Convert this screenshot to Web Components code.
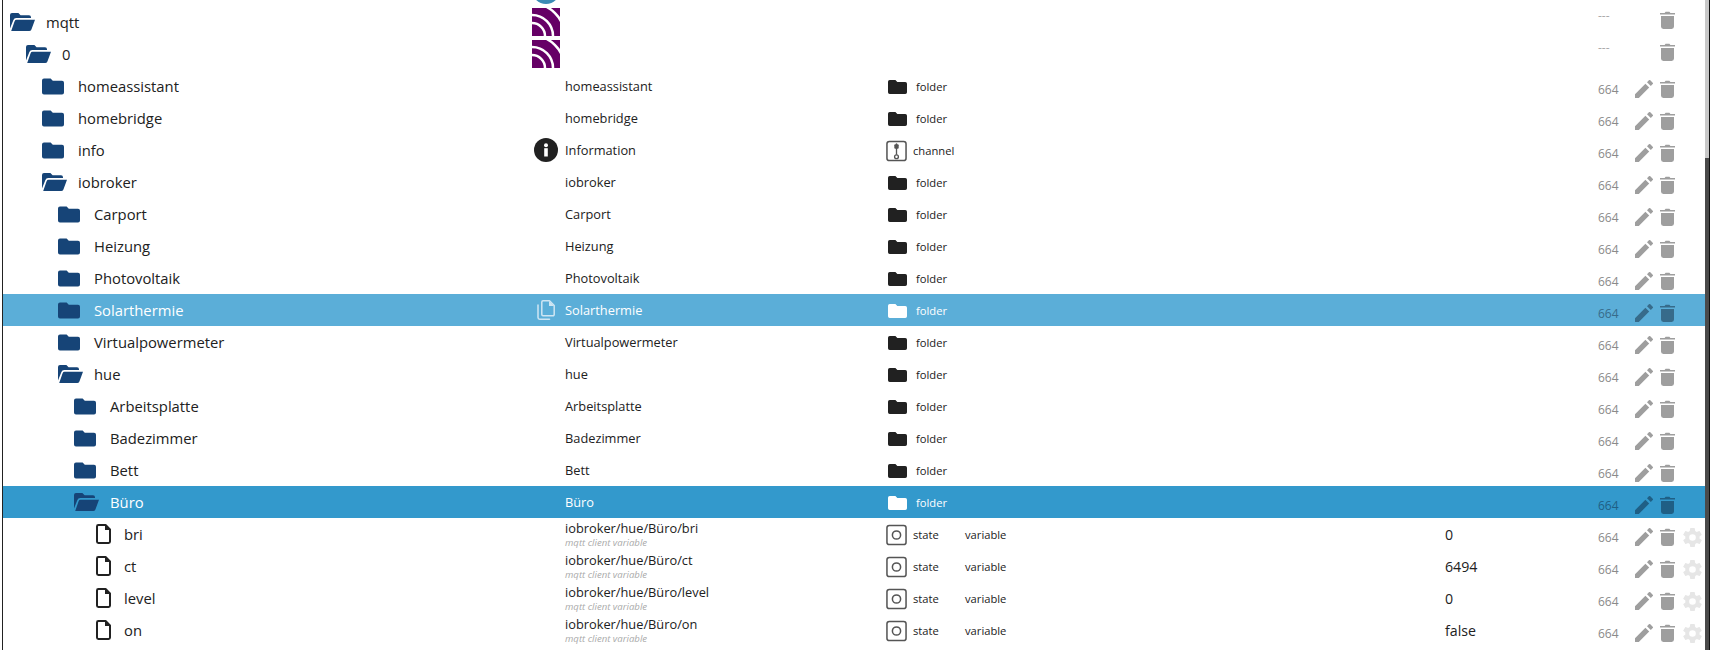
<!DOCTYPE html>
<html>
<head>
<meta charset="utf-8">
<title>Objects</title>
<style>
    html, body { margin: 0; height: 650px; overflow: hidden; background: #fff; }
</style>
</head>
<body>
<object-browser></object-browser>

<script>
const FOLDER_PATH = 'M2 0h6.6l2.2 2.2H20a2 2 0 0 1 2 2V14a2 2 0 0 1-2 2H2a2 2 0 0 1-2-2V2a2 2 0 0 1 2-2z';

const ICONS = {
    folder: `<svg viewBox="0 0 22 16" width="22" height="17"><path fill="currentColor" d="${FOLDER_PATH}"/></svg>`,
    smallfolder: `<svg viewBox="0 0 22 16" width="19" height="14"><path fill="currentColor" d="${FOLDER_PATH}"/></svg>`,
    open: '<svg viewBox="0 0 25 18" width="25" height="18"><path fill="currentColor" d="M2 0h6.400l2.200 2.200H19a2 2 0 0 1 2 2V5H6.200A3 3 0 0 0 3.400 7L0 15.400V2a2 2 0 0 1 2-2z"/><path fill="currentColor" d="M6.600 6.800H25l-3.400 9.200a2.400 2.400 0 0 1-2.200 2H1.200L4.600 8.200a2.200 2.200 0 0 1 2-1.400z"/></svg>',
    file: '<svg viewBox="0 0 15 20" width="15" height="20"><path fill="none" stroke="currentColor" stroke-width="2" stroke-linejoin="round" d="M2.400 1H9.600L14 5.400V17.600A1.400 1.400 0 0 1 12.600 19H2.400A1.400 1.400 0 0 1 1 17.600V2.400A1.400 1.400 0 0 1 2.400 1z"/><path fill="currentColor" d="M9 1h1l4 4v1H9z"/></svg>',
    pencil: '<svg viewBox="0 0 18 18" width="18" height="18"><path fill="currentColor" d="M0 14.200V18h3.800L14.200 7.600l-3.800-3.800zM17.700 4.100a1 1 0 0 0 0-1.400L15.300.3a1 1 0 0 0-1.400 0L12 2.200 15.800 6z"/></svg>',
    trash: '<svg viewBox="0 0 15 18" width="15" height="18"><path fill="currentColor" d="M1 5h13v10.600a2.400 2.400 0 0 1-2.400 2.400H3.400A2.400 2.400 0 0 1 1 15.600zM0 2h4.600l1-1.200h3.800l1 1.200H15v1.600H0z"/></svg>',
    gear: '<svg viewBox="2 2 20 20" width="19" height="19"><path fill="currentColor" d="M19.400 13a7.500 7.500 0 0 0 0-2l2.100-1.600a.5.5 0 0 0 .1-.6l-2-3.500a.5.5 0 0 0-.6-.2l-2.500 1a7.300 7.300 0 0 0-1.700-1l-.4-2.700A.5.5 0 0 0 14 2h-4a.5.5 0 0 0-.5.4l-.4 2.700a7.300 7.300 0 0 0-1.700 1l-2.500-1a.5.5 0 0 0-.6.2l-2 3.500a.5.5 0 0 0 .1.6L4.500 11a7.500 7.500 0 0 0 0 2l-2.100 1.600a.5.5 0 0 0-.1.6l2 3.500a.5.5 0 0 0 .6.2l2.500-1a7.300 7.300 0 0 0 1.700 1l.4 2.700a.5.5 0 0 0 .5.4h4a.5.5 0 0 0 .5-.4l.4-2.700a7.300 7.300 0 0 0 1.700-1l2.500 1a.5.5 0 0 0 .6-.2l2-3.500a.5.5 0 0 0-.1-.6zM12 15.500a3.500 3.500 0 1 1 0-7 3.500 3.500 0 0 1 0 7z"/></svg>',
    info: '<svg viewBox="0 0 24 24" width="24" height="24"><circle cx="12" cy="12" r="12" fill="#212121"/><rect x="10.200" y="10.200" width="3.600" height="8.300" fill="#fff"/><circle cx="12" cy="7.200" r="2" fill="#fff"/></svg>',
    copy: '<svg viewBox="0 0 18 20" width="18" height="20"><path fill="none" stroke="#cfe6f3" stroke-width="1.500" stroke-linejoin="round" d="M6 .8h6.500L17.200 5.500V14.500A1.200 1.200 0 0 1 16 15.700H6A1.200 1.200 0 0 1 4.800 14.500V2A1.200 1.200 0 0 1 6 .8z"/><path fill="none" stroke="#cfe6f3" stroke-width="1.500" stroke-linecap="round" d="M1 5v12.600A1.600 1.600 0 0 0 2.600 19.200H12.500"/><path fill="#cfe6f3" d="M12 1l5 5h-5z"/></svg>',
    channel: '<svg viewBox="0 0 22 22" width="21" height="22"><rect x="1" y="1" width="20" height="20" rx="2.500" fill="none" stroke="#555" stroke-width="1.600"/><rect x="8.700" y="4" width="4.600" height="4.600" rx="1" fill="#555"/><path stroke="#555" stroke-width="1.400" d="M11 3v12"/><circle cx="11" cy="17" r="2" fill="#fff" stroke="#555" stroke-width="1.400"/></svg>',
    state: '<svg viewBox="0 0 22 22" width="21" height="22"><rect x="1" y="1" width="20" height="20" rx="2.500" fill="none" stroke="#555" stroke-width="1.600"/><circle cx="11" cy="11" r="4.300" fill="none" stroke="#555" stroke-width="1.600"/></svg>',
    mqtt: '<svg viewBox="0 0 28 28" width="28" height="28"><rect width="28" height="28" fill="#660066"/><g fill="none" stroke="#fff" stroke-width="2.500"><path d="M0 15A13 13 0 0 1 13 28"/><path d="M0 7A21 21 0 0 1 21 28"/><path d="M0 -4.500A32.500 32.500 0 0 1 32.500 28"/></g></svg>',
    adapter: '<svg viewBox="0 0 28 28" width="28" height="28"><circle cx="14" cy="14" r="14" fill="#3b8bb5"/><circle cx="14" cy="14" r="10" fill="#2a4a66"/></svg>'
};

class TreeIcon extends HTMLElement {
    constructor() {
        super();
        const shadow = this.attachShadow({ mode: 'open' });
        shadow.innerHTML = `
            <style>
                :host { display: inline-flex; align-items: center; flex: none; }
                svg { display: block; }
            </style>
            ${ICONS[this.getAttribute('name')] || ''}
        `;
    }
}
customElements.define('tree-icon', TreeIcon);

class ObjectRow extends HTMLElement {
    constructor() {
        super();
        const shadow = this.attachShadow({ mode: 'open' });
        shadow.innerHTML = `
            <style>
                :host {
                    display: grid;
                    grid-template-columns: 529px 28px 5px 321px 79px 480px 153px 37px 25px 23px 1fr;
                    align-items: center;
                    height: 32px;
                    color: #212121;
                    white-space: nowrap;
                }
                :host([sel]) { background: #3399cc; color: #fff; }
                :host([hov]) { background: #5baed8; color: #fff; }
                .id { display: flex; align-items: center; height: 32px; font-size: 14.8px; }
                .id tree-icon { width: 25px; margin-right: 11px; color: #164477; }
                .id tree-icon.file { width: 19px; padding-left: 6px; margin-right: 9px; color: #212121; }
                .pic { display: flex; justify-content: center; align-items: center; grid-column: 2 / span 1; }
                .name { grid-column: 4; line-height: 17px; font-size: 12.8px; margin-top: 1px; }
                .name.two { margin-top: 0; }
                .sub { display: block; font-size: 9.6px; line-height: 12px; font-style: italic; color: #aaa; }
                .type { display: flex; align-items: center; font-size: 11.2px; padding-top: 2px; }
                .type span { margin-top: -2px; }
                .type tree-icon { margin-left: 2px; margin-right: 9px; }
                .type.big tree-icon { margin-left: 0; margin-right: 6px; }
                .role { font-size: 11.2px; padding-top: 1px; }
                .value { font-size: 14.2px; }
                .acl { font-size: 12px; color: #8a8a8a; padding-top: 6px; }
                .act { display: flex; padding-top: 6px; color: #9e9e9e; }
                .act.gear { color: #e6e6e6; justify-content: flex-start; }
                :host([sel]) .acl, :host([sel]) .act { color: #1f5f85; }
                :host([hov]) .acl, :host([hov]) .act { color: #376b8a; }
                :host([sel]) .type tree-icon, :host([hov]) .type tree-icon { color: #fff; }
                :host([bare]) .acl { padding: 0 0 13px; color: #aaa; }
                :host([bare]) .act { padding: 0 0 4px; }
            </style>
            <div class="id"></div>
            <div class="pic"></div>
            <div class="name"></div>
            <div class="type"></div>
            <div class="role"></div>
            <div class="value"></div>
            <div class="acl"></div>
            <div class="act"></div>
            <div class="act"></div>
            <div class="act gear"></div>
        `;
    }

    connectedCallback() {
        const s = this.shadowRoot;
        const get = (k) => this.getAttribute(k) || '';
        const kind = get('kind');
        const icon = (name, cls) => `<tree-icon name="${name}" class="${cls || ''}"></tree-icon>`;

        const idCell = s.querySelector('.id');
        idCell.style.paddingLeft = (7 + Number(get('level')) * 16) + 'px';
        if (kind) idCell.innerHTML = `${icon(kind, kind)}<span>${get('label')}</span>`;

        if (get('pic')) s.querySelector('.pic').innerHTML = icon(get('pic'));

        const nameCell = s.querySelector('.name');
        nameCell.textContent = get('name');
        if (get('sub')) {
            const sub = document.createElement('span');
            sub.className = 'sub';
            sub.textContent = get('sub');
            nameCell.append(sub);
            nameCell.classList.add('two');
        }

        const type = get('type');
        const typeCell = s.querySelector('.type');
        if (type) {
            typeCell.classList.toggle('big', type !== 'folder');
            typeCell.innerHTML = `${icon(type === 'folder' ? 'smallfolder' : type)}<span>${type}</span>`;
        }
        s.querySelector('.role').textContent = get('role');
        s.querySelector('.value').textContent = get('value');

        const acl = get('acl');
        s.querySelector('.acl').textContent = acl;
        const acts = s.querySelectorAll('.act');
        if (acl === '664') acts[0].innerHTML = icon('pencil');
        if (acl) acts[1].innerHTML = icon('trash');
        if (get('value')) acts[2].innerHTML = icon('gear');
    }
}
customElements.define('object-row', ObjectRow);

class ObjectBrowser extends HTMLElement {
    constructor() {
        super();
        const shadow = this.attachShadow({ mode: 'open' });
        shadow.innerHTML = `
            <style>
                :host {
                    display: flex;
                    height: 650px;
                    overflow: hidden;
                    padding-left: 2px;
                    box-sizing: border-box;
                    font-family: "Open Sans", "Noto Sans", sans-serif;
                    background: #fff;
                }
                .edge { width: 1px; flex: none; background: #222; }
                .list { flex: 1; min-width: 0; overflow: hidden; }
                .rows { margin-top: -26px; }
                .bar { width: 4px; flex: none; background: #c8c8c8; }
                .thumb { height: 100%; background: #4a4a4a; margin-top: 158px; }
                .line { width: 1px; flex: none; background: #111; }
            </style>
            <div class="edge"></div>
            <div class="list"><div class="rows"><slot></slot></div></div>
            <div class="bar"><div class="thumb"></div></div>
            <div class="line"></div>
        `;
    }

    connectedCallback() {
        const folder = (label, level, extra) => ({ label, level, kind: 'folder', name: label, type: 'folder', acl: '664', ...extra });
        const state = (label, value) => ({
            label, level: 5, kind: 'file', name: 'iobroker/hue/Büro/' + label, sub: 'mqtt client variable',
            type: 'state', role: 'variable', value, acl: '664'
        });
        const data = [
            { level: 0, pic: 'adapter' },
            { label: 'mqtt', level: 0, kind: 'open', pic: 'mqtt', acl: '---', bare: true },
            { label: '0', level: 1, kind: 'open', pic: 'mqtt', acl: '---', bare: true },
            folder('homeassistant', 2),
            folder('homebridge', 2),
            { ...folder('info', 2), name: 'Information', pic: 'info', type: 'channel' },
            folder('iobroker', 2, { kind: 'open' }),
            folder('Carport', 3),
            folder('Heizung', 3),
            folder('Photovoltaik', 3),
            folder('Solarthermie', 3, { hov: true, pic: 'copy' }),
            folder('Virtualpowermeter', 3),
            folder('hue', 3, { kind: 'open' }),
            folder('Arbeitsplatte', 4),
            folder('Badezimmer', 4),
            folder('Bett', 4),
            folder('Büro', 4, { kind: 'open', sel: true }),
            state('bri', '0'),
            state('ct', '6494'),
            state('level', '0'),
            state('on', 'false')
        ];
        for (const d of data) {
            const row = document.createElement('object-row');
            for (const [k, v] of Object.entries(d)) {
                row.setAttribute(k, v === true ? '' : v);
            }
            this.append(row);
        }
    }
}
customElements.define('object-browser', ObjectBrowser);
</script>
</body>
</html>
